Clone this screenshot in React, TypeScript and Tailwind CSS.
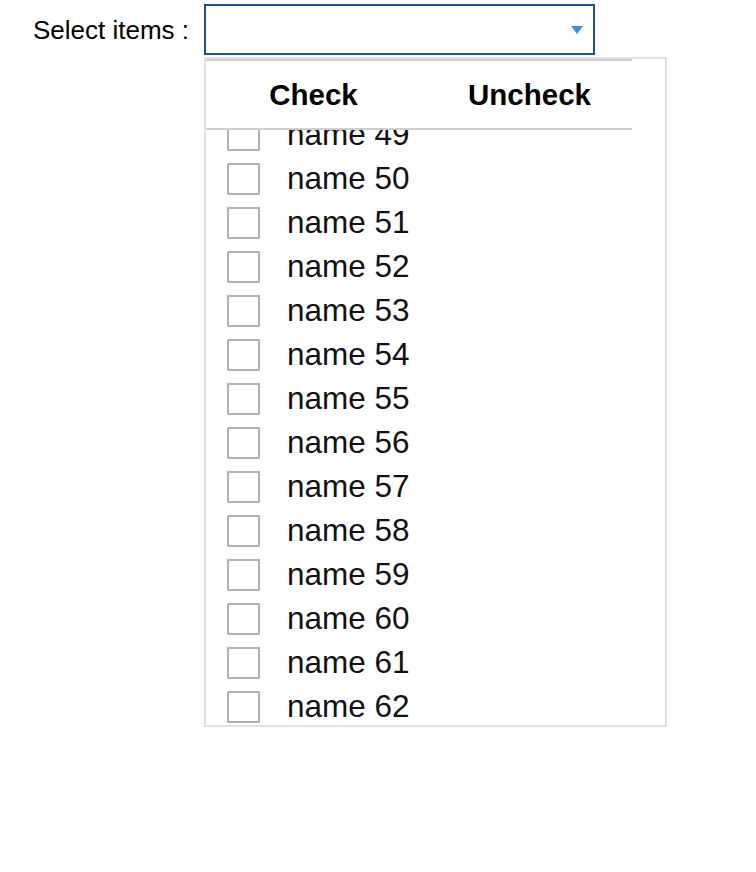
const names = Array.from({ length: 14 }, (_, i) => `name ${49 + i}`);

function Arrow() {
  return (
    <svg width="12" height="8" viewBox="0 0 12 8" aria-hidden>
      <path d="M0 0h12L6 8z" fill="#3a8ddb" />
    </svg>
  );
}

export default function App() {
  return (
    <div className="h-[872px] w-[756px] bg-white font-['Liberation_Sans',Arial,sans-serif] text-black">
      <div className="flex items-start pt-1">
        <label className="mt-[11px] w-[204px] pl-[33px] text-[26px] leading-[30px]">
          Select items :
        </label>
        <div className="flex flex-col">
          {/* Dropdown trigger */}
          <button className="flex h-[51px] w-[391px] items-center justify-end border-2 border-[#23508f] bg-white pr-[10px]">
            <Arrow />
          </button>

          {/* Dropdown panel */}
          <div className="mt-[2px] flex h-[670px] w-[463px] flex-col border-2 border-[#e2e2e2] bg-white">
            <div className="w-[426px] shrink-0 border-b-2 border-t-2 border-[#cfcfcf] bg-white">
              <div className="grid h-[67px] grid-cols-2 items-center pt-[2px] text-center text-[29.5px] font-bold">
                <span className="pl-[2px]">Check</span>
                <span className="pl-[8px]">Uncheck</span>
              </div>
            </div>
            <div className="min-h-0 flex-1 overflow-hidden">
              <ul className="-mt-[17px]">
                {names.map((n) => (
                  <li key={n} className="flex h-[44px] items-center pl-[21px]">
                    <span className="h-[32px] w-[33px] shrink-0 rounded-[1px] border-2 border-[#b0b0b0] bg-white" />
                    <span className="ml-[27px] text-[31.5px] leading-none text-[#111]">{n}</span>
                  </li>
                ))}
              </ul>
            </div>
          </div>
        </div>
      </div>
    </div>
  );
}
